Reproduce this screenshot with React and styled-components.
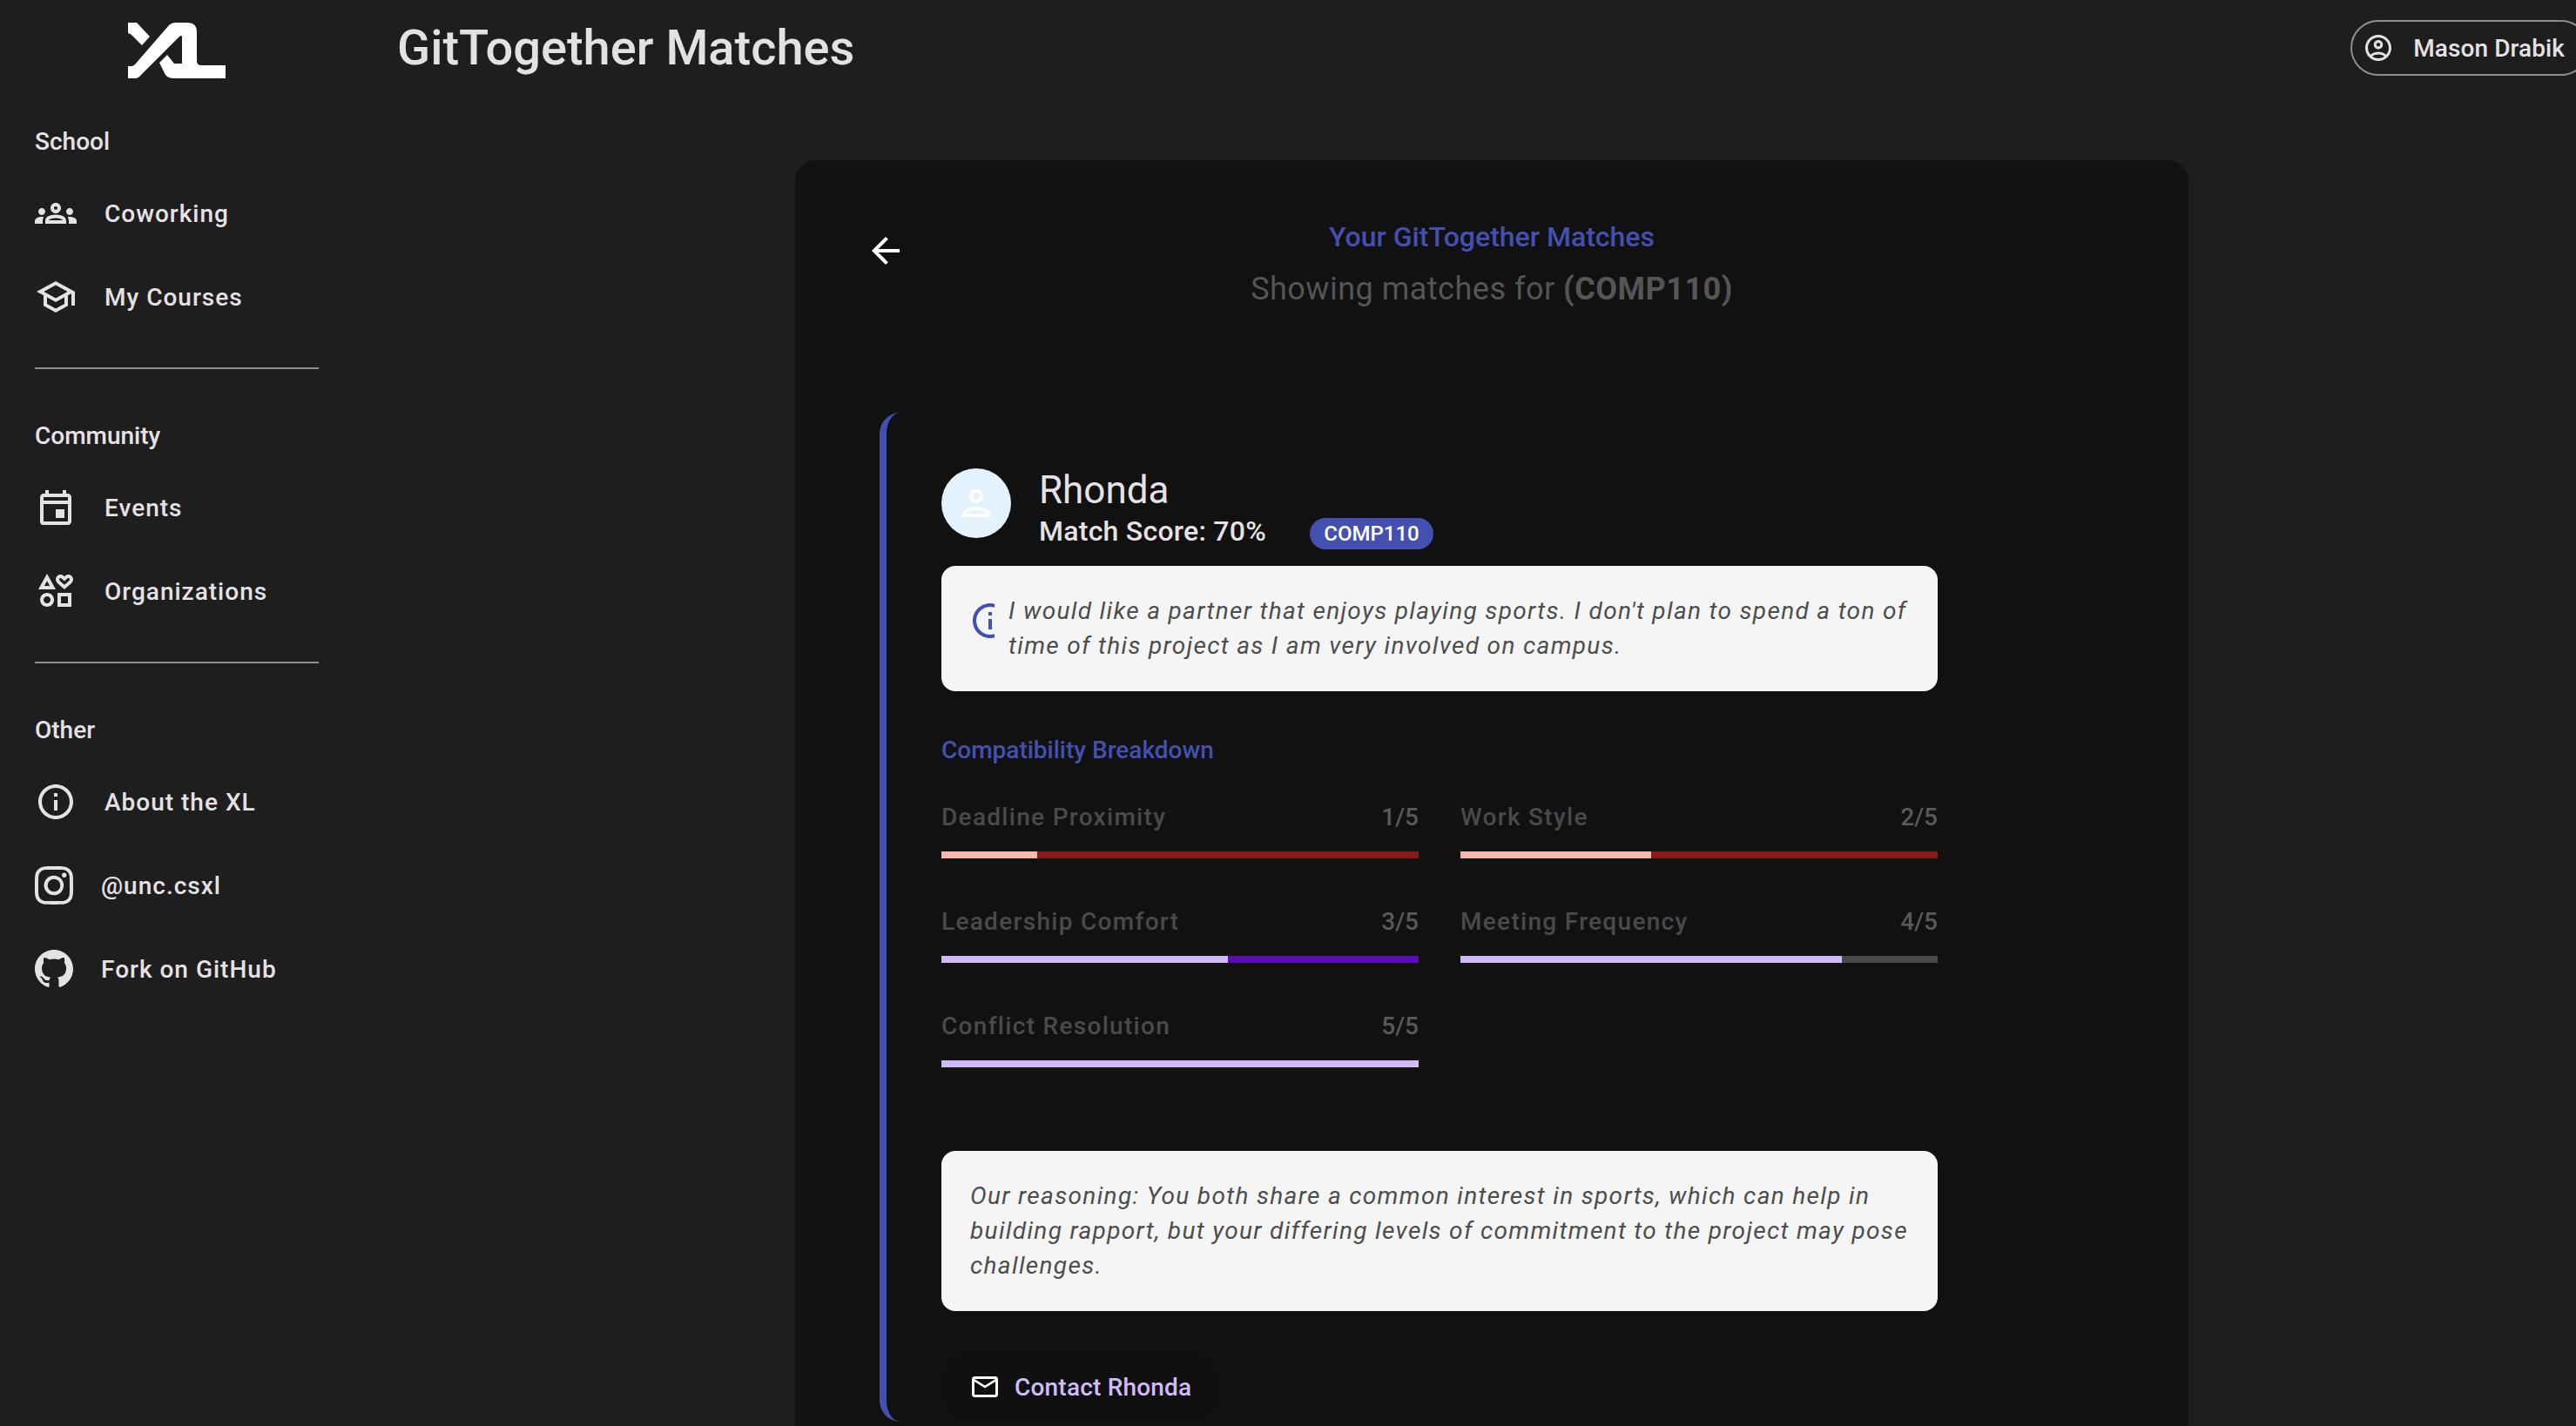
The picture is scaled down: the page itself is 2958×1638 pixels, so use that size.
import React from 'react';
import styled, { createGlobalStyle } from 'styled-components';
import {
    MdOutlineGroups,
    MdOutlineSchool,
    MdOutlineEvent,
    MdOutlineInterests,
    MdInfoOutline,
    MdOutlineAccountCircle,
    MdOutlineMailOutline,
    MdArrowBack,
    MdOutlinePerson,
} from 'react-icons/md';
import { BsInstagram, BsGithub } from 'react-icons/bs';

const navSections = [
    {
        label: 'School',
        items: [
            { icon: MdOutlineGroups, text: 'Coworking' },
            { icon: MdOutlineSchool, text: 'My Courses' },
        ],
    },
    {
        label: 'Community',
        items: [
            { icon: MdOutlineEvent, text: 'Events' },
            { icon: MdOutlineInterests, text: 'Organizations' },
        ],
    },
    {
        label: 'Other',
        items: [
            { icon: MdInfoOutline, text: 'About the XL' },
            { icon: BsInstagram, text: '@unc.csxl', brand: true },
            { icon: BsGithub, text: 'Fork on GitHub', brand: true },
        ],
    },
];

const scores = [
    { label: 'Deadline Proximity', value: 1, fill: '#f4b8ae', track: '#861a17' },
    { label: 'Work Style', value: 2, fill: '#f4b8ae', track: '#861a17' },
    { label: 'Leadership Comfort', value: 3, fill: '#cfbcf7', track: '#5a0bb8' },
    { label: 'Meeting Frequency', value: 4, fill: '#cfbcf7', track: '#4a4a4a' },
    { label: 'Conflict Resolution', value: 5, fill: '#cfbcf7', track: '#4a4a4a' },
];

function App() {
    return (
        <Page>
            <GlobalStyle />
            <Sidebar>
                <Logo viewBox="0 0 112 64" aria-label="XL">
                    <path d="M0 0H10L25 16L16 26L6 16Q4 13 0 12Z" />
                    <path d="M0 50H4Q6 50 8 48L47 3Q50 0 54 0H68Q79 0 79 11V44Q79 49 84 49H112V64H53Q46 64 43 60L36 46L45 37L53 47H62V16Q61 14 59 16L15 60Q12 64 8 64H0Z" />
                </Logo>
                {navSections.map((section, i) => (
                    <NavSection key={section.label} $first={i === 0}>
                        <SectionLabel>{section.label}</SectionLabel>
                        <NavList>
                            {section.items.map((item) => (
                                <NavItem key={item.text}>
                                    <item.icon size={item.brand ? 44 : 48} />
                                    {item.text}
                                </NavItem>
                            ))}
                        </NavList>
                        {i < navSections.length - 1 && <Divider />}
                    </NavSection>
                ))}
            </Sidebar>
            <Main>
                <Header>
                    <PageTitle>GitTogether Matches</PageTitle>
                    <UserChip>
                        <MdOutlineAccountCircle size={36} />
                        Mason Drabik
                    </UserChip>
                </Header>
                <Content>
                    <Panel>
                        <PanelHeader>
                            <BackButton>
                                <MdArrowBack size={48} />
                            </BackButton>
                            <PanelTitles>
                                <PanelTitle>Your GitTogether Matches</PanelTitle>
                                <PanelSubtitle>
                                    Showing matches for <strong>(COMP110)</strong>
                                </PanelSubtitle>
                            </PanelTitles>
                        </PanelHeader>
                        <MatchCard>
                            <MatchHead>
                                <Avatar>
                                    <MdOutlinePerson size={48} />
                                </Avatar>
                                <div>
                                    <MatchName>Rhonda</MatchName>
                                    <ScoreRow>
                                        <MatchScore>Match Score: 70%</MatchScore>
                                        <CourseBadge>COMP110</CourseBadge>
                                    </ScoreRow>
                                </div>
                            </MatchHead>
                            <NoteBox>
                                <NoteIcon>
                                    <MdInfoOutline size={48} />
                                </NoteIcon>
                                <NoteText>
                                    I would like a partner that enjoys playing sports. I don't plan to spend a ton of time of this project as I am very involved on campus.
                                </NoteText>
                            </NoteBox>
                            <BreakdownTitle>Compatibility Breakdown</BreakdownTitle>
                            <ScoreGrid>
                                {scores.map((score) => (
                                    <ScoreItem key={score.label}>
                                        <ScoreLabels>
                                            <ScoreName>{score.label}</ScoreName>
                                            <ScoreValue>{score.value}/5</ScoreValue>
                                        </ScoreLabels>
                                        <ScoreTrack $color={score.track}>
                                            <ScoreFill $color={score.fill} style={{ width: `${score.value * 20}%` }} />
                                        </ScoreTrack>
                                    </ScoreItem>
                                ))}
                            </ScoreGrid>
                            <ReasonBox>
                                Our reasoning: You both share a common interest in sports, which can help in building rapport, but your differing levels of commitment to the project may pose challenges.
                            </ReasonBox>
                            <ContactButton>
                                <MdOutlineMailOutline size={36} />
                                Contact Rhonda
                            </ContactButton>
                        </MatchCard>
                    </Panel>
                </Content>
            </Main>
        </Page>
    );
}

const GlobalStyle = createGlobalStyle`
    html, body {
        margin: 0;
        height: 100%;
        overflow: hidden;
        background: #1e1e1e;
    }
    body {
        font-family: Roboto, "Liberation Sans", sans-serif;
    }
`;

const Page = styled.div`
    display: flex;
    width: 100vw;
    height: 100vh;
    overflow: hidden;
    background: #1e1e1e;
`;

const Sidebar = styled.nav`
    flex: 0 0 400px;
    box-sizing: border-box;
    padding: 26px 34px 0 40px;
    display: flex;
    flex-direction: column;
    color: #e6e1e5;
`;

const Logo = styled.svg`
    width: 112px;
    height: 64px;
    flex: none;
    align-self: center;
    fill: #ffffff;
`;

const NavSection = styled.section`
    margin-top: ${(props) => (props.$first ? '53px' : '57px')};
`;

const SectionLabel = styled.div`
    font-size: 28px;
    font-weight: 500;
    line-height: 40px;
`;

const NavList = styled.div`
    margin-top: 14px;
    display: flex;
    flex-direction: column;
`;

const NavItem = styled.a`
    height: 96px;
    display: flex;
    align-items: center;
    gap: 32px;
    font-size: 28px;
    font-weight: 500;
    letter-spacing: 1px;
    color: #e6e1e5;

    svg {
        flex: none;
    }
`;

const Divider = styled.hr`
    margin: 33px 0 0;
    border: 0;
    border-top: 2px solid #8e8e8e;
`;

const Main = styled.main`
    flex: 1;
    min-width: 0;
    display: flex;
    flex-direction: column;
`;

const Header = styled.header`
    height: 110px;
    flex: none;
    display: flex;
    align-items: center;
    justify-content: space-between;
    padding-left: 56px;
    margin-right: -15px;
`;

const PageTitle = styled.h1`
    margin: 0;
    font-size: 56px;
    font-weight: 500;
    color: #e2e2e2;
`;

const UserChip = styled.div`
    box-sizing: border-box;
    height: 64px;
    display: flex;
    align-items: center;
    gap: 22px;
    padding: 0 26px 0 12px;
    border: 2px solid #8e8e8e;
    border-radius: 32px;
    font-size: 28px;
    font-weight: 500;
    letter-spacing: 0.1px;
    color: #e6e1e5;
`;

const Content = styled.div`
    margin-top: 74px;
    padding-left: 513px;
`;

const Panel = styled.div`
    box-sizing: border-box;
    width: 1600px;
    padding: 64px 80px 120px;
    background: #111111;
    border-radius: 24px;
`;

const PanelHeader = styled.div`
    display: grid;
    grid-template-columns: 48px 1fr 48px;
    align-items: start;
`;

const BackButton = styled.div`
    display: flex;
    margin-top: 16px;
    color: #ffffff;
`;

const PanelTitles = styled.div`
    text-align: center;
`;

const PanelTitle = styled.div`
    font-size: 32px;
    font-weight: 500;
    line-height: 48px;
    color: #4350b0;
`;

const PanelSubtitle = styled.div`
    margin-top: 12px;
    font-size: 36px;
    line-height: 48px;
    letter-spacing: 0.5px;
    color: #555555;

    strong {
        font-weight: 700;
    }
`;

const MatchCard = styled.article`
    margin: 118px 144px 0 17px;
    padding: 64px 64px 0 63px;
    border-left: 8px solid #4350b0;
    border-radius: 24px;
`;

const MatchHead = styled.div`
    display: flex;
    align-items: flex-start;
    gap: 32px;
`;

const Avatar = styled.div`
    width: 80px;
    height: 80px;
    display: flex;
    align-items: center;
    justify-content: center;
    border-radius: 50%;
    background: #e3f2fd;
    color: #ffffff;
`;

const MatchName = styled.div`
    font-size: 44px;
    line-height: 50px;
    color: #e6e1e5;
`;

const ScoreRow = styled.div`
    margin-top: 1px;
    display: flex;
    align-items: center;
    gap: 50px;
`;

const MatchScore = styled.div`
    font-size: 32px;
    font-weight: 500;
    line-height: 40px;
    letter-spacing: 0.25px;
    color: #e6e1e5;
`;

const CourseBadge = styled.div`
    width: 142px;
    height: 36px;
    display: flex;
    align-items: center;
    justify-content: center;
    margin-top: 6px;
    border-radius: 18px;
    background: #4350b0;
    font-size: 24px;
    font-weight: 500;
    color: #ffffff;
`;

const NoteBox = styled.div`
    margin-top: 19px;
    padding: 32px 28px 32px 32px;
    display: flex;
    gap: 16px;
    background: #f5f5f5;
    border-radius: 16px;
    color: #4d4d4d;
`;

const NoteIcon = styled.div`
    flex: 0 0 29px;
    height: 48px;
    margin-top: 7px;
    overflow: hidden;
    color: #4350b0;
`;

const NoteText = styled.div`
    font-size: 28px;
    font-style: italic;
    line-height: 40px;
    letter-spacing: 1.33px;
`;

const BreakdownTitle = styled.div`
    margin-top: 48px;
    font-size: 28px;
    font-weight: 500;
    line-height: 40px;
    color: #4350b0;
`;

const ScoreGrid = styled.div`
    margin-top: 36px;
    display: grid;
    grid-template-columns: 548px 548px;
    column-gap: 48px;
    row-gap: 32px;
`;

const ScoreItem = styled.div`
    display: flex;
    flex-direction: column;
    height: 88px;
`;

const ScoreLabels = styled.div`
    height: 40px;
    display: flex;
    align-items: center;
    justify-content: space-between;
`;

const ScoreName = styled.span`
    font-size: 28px;
    font-weight: 500;
    letter-spacing: 1.3px;
    color: #4a4a4a;
`;

const ScoreValue = styled.span`
    font-size: 28px;
    font-weight: 500;
    color: #5a5a5a;
`;

const ScoreTrack = styled.div`
    height: 8px;
    margin-top: 20px;
    background: ${(props) => props.$color};
`;

const ScoreFill = styled.div`
    height: 100%;
    background: ${(props) => props.$color};
`;

const ReasonBox = styled.div`
    margin-top: 76px;
    padding: 32px 28px 32px 33px;
    background: #f5f5f5;
    border-radius: 16px;
    font-size: 28px;
    font-style: italic;
    line-height: 40px;
    letter-spacing: 1.33px;
    color: #4d4d4d;
`;

const ContactButton = styled.button`
    margin-top: 47px;
    height: 80px;
    display: flex;
    align-items: center;
    gap: 16px;
    padding: 0 32px;
    border: 0;
    border-radius: 40px;
    background: #101010;
    font-family: inherit;
    font-size: 28px;
    font-weight: 500;
    letter-spacing: 0.2px;
    color: #cfbcf7;

    svg {
        color: #ffffff;
    }
`;

export default App;
